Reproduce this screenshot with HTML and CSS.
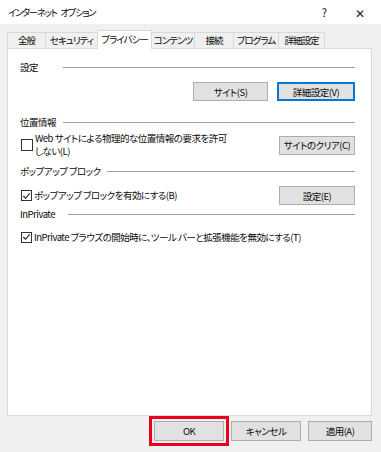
FILE: index.html
```html
<!DOCTYPE html>
<html lang="ja">
<head>
    <meta charset="UTF-8">
    <title>インターネット オプション</title>
    <link rel="stylesheet" href="styles.css">
</head>
<body>

    <div class="titlebar">
        <span class="title">インターネット オプション</span>
        <span class="help">?</span>
        <span class="close">✕</span>
    </div>

    <div class="client">
        <div class="tabs">
            <div class="tab t1">全般</div>
            <div class="tab t2">セキュリティ</div>
            <div class="tab t3 active">プライバシー</div>
            <div class="tab t4">コンテンツ</div>
            <div class="tab t5">接続</div>
            <div class="tab t6">プログラム</div>
            <div class="tab t7">詳細設定</div>
        </div>

        <div class="panel">
            <div class="legend g1"><span>設定</span></div>
            <div class="row buttons-right r1">
                <button class="btn">サイト(S)</button>
                <button class="btn focus">詳細設定(V)</button>
            </div>

            <div class="legend g2"><span>位置情報</span></div>
            <div class="row r2">
                <label class="check">
                    <span class="box"></span>
                    <span class="text">Web サイトによる物理的な位置情報の要求を許可<br>しない(L)</span>
                </label>
                <button class="btn">サイトのクリア(C)</button>
            </div>

            <div class="legend g3"><span>ポップアップ ブロック</span></div>
            <div class="row r3">
                <label class="check">
                    <span class="box checked">
                        <svg width="10" height="10" viewBox="0 0 10 10"><path d="M1.5 5 L4 7.5 L8.5 2" fill="none" stroke="#222" stroke-width="1.3"/></svg>
                    </span>
                    <span class="text">ポップアップ ブロックを有効にする(B)</span>
                </label>
                <button class="btn">設定(E)</button>
            </div>

            <div class="legend g4"><span>InPrivate</span></div>
            <div class="row r4">
                <label class="check">
                    <span class="box checked">
                        <svg width="10" height="10" viewBox="0 0 10 10"><path d="M1.5 5 L4 7.5 L8.5 2" fill="none" stroke="#222" stroke-width="1.3"/></svg>
                    </span>
                    <span class="text">InPrivate ブラウズの開始時に、ツール バーと拡張機能を無効にする(T)</span>
                </label>
            </div>
        </div>

        <div class="footer">
            <button class="btn ok">OK</button>
            <button class="btn cancel">キャンセル</button>
            <button class="btn apply">適用(A)</button>
        </div>
    </div>

</body>
</html>
```

FILE: styles.css
```css
body {
    margin: 0;
    padding: 0;
    width: 381px;
    height: 452px;
    overflow: hidden;
    background: #f0f0f0;
    font-family: "Noto Sans CJK JP", sans-serif;
    font-size: 9.5px;
    letter-spacing: -0.5px;
    font-feature-settings: "palt";
    color: #0a0a0a;
    white-space: nowrap;
}
.titlebar {
    height: 24px;
    background: #fff;
    display: flex;
    align-items: center;
    padding-left: 8px;
}
.title {
    flex: 1;
    letter-spacing: -1.4px;
    word-spacing: 3px;
}
.help {
    width: 20px;
    margin-right: 16px;
    text-align: center;
    font-size: 11px;
}
.close {
    width: 20px;
    margin-right: 11px;
    text-align: center;
    font-size: 12px;
    color: #222;
}
.client {
    padding: 6px 9px 0 7px;
}
.tabs {
    display: flex;
    align-items: flex-end;
    height: 18px;
    position: relative;
    z-index: 1;
}
.tab {
    height: 15px;
    line-height: 15px;
    border: 1px solid #d9d9d9;
    border-bottom: none;
    border-right: none;
    background: #f0f0f0;
    text-align: center;
    letter-spacing: -1px;
    box-sizing: content-box;
}
.tab.t1 { width: 37px; }
.tab.t2 { width: 51px; }
.tab.t3 { width: 53px; }
.tab.t4 { width: 42px; }
.tab.t5 { width: 38px; }
.tab.t6 { width: 44px; }
.tab.t7 { width: 45px; border-right: 1px solid #d9d9d9; }
.tab.active {
    height: 18px;
    line-height: 16px;
    background: #fff;
    border-right: 1px solid #d9d9d9;
    margin-bottom: -1px;
}
.tab.active + .tab {
    border-left: none;
}
.panel {
    height: 368px;
    background: #fff;
    border: 1px solid #d9d9d9;
    padding: 10px 16px 0 12px;
    box-sizing: border-box;
}
.legend {
    display: flex;
    align-items: center;
    line-height: 16px;
}
.legend span {
    min-width: 37px;
    margin-right: 6px;
}
.legend::after {
    content: "";
    flex: 1;
    border-top: 1px solid #a0a0a0;
}
.legend.g4 span {
    margin-right: 11px;
}
.g2 { margin-top: 13px; }
.g3 { margin-top: 5px; }
.g4 { margin-top: 1px; }
.row {
    display: flex;
    align-items: center;
    justify-content: space-between;
}
.buttons-right {
    justify-content: flex-end;
    gap: 9px;
}
.r1 { margin-top: 7px; }
.r2 { margin-top: 2px; }
.r3 { margin-top: 7px; }
.r4 { margin-top: 7px; height: 16px; }
.btn {
    width: 76px;
    height: 19px;
    padding: 0;
    margin: 0;
    background: #e1e1e1;
    border: 1px solid #adadad;
    font-family: inherit;
    font-size: 9.5px;
    letter-spacing: -0.5px;
    font-feature-settings: "palt";
    white-space: nowrap;
    color: #0a0a0a;
}
.r1 .btn:first-child { width: 75px; }
.btn.focus {
    border: 2px solid #0078d7;
    width: 78px;
}
.check {
    display: flex;
    align-items: center;
    gap: 2px;
    margin-left: 1px;
}
.check .text {
    line-height: 13px;
}
.box {
    width: 12px;
    height: 12px;
    border: 1px solid #333;
    background: #fff;
    box-sizing: border-box;
    display: flex;
    align-items: center;
    justify-content: center;
}
.box.checked {
    width: 11px;
    height: 11px;
}
.footer {
    display: flex;
    justify-content: flex-end;
    gap: 7px;
    padding-top: 5px;
}
.footer .btn {
    height: 20px;
}
.footer .ok {
    width: 70px;
    outline: 3px solid #e8001c;
    outline-offset: 2px;
}
.footer .cancel { width: 70px; }
.footer .apply { width: 64px; }
```
